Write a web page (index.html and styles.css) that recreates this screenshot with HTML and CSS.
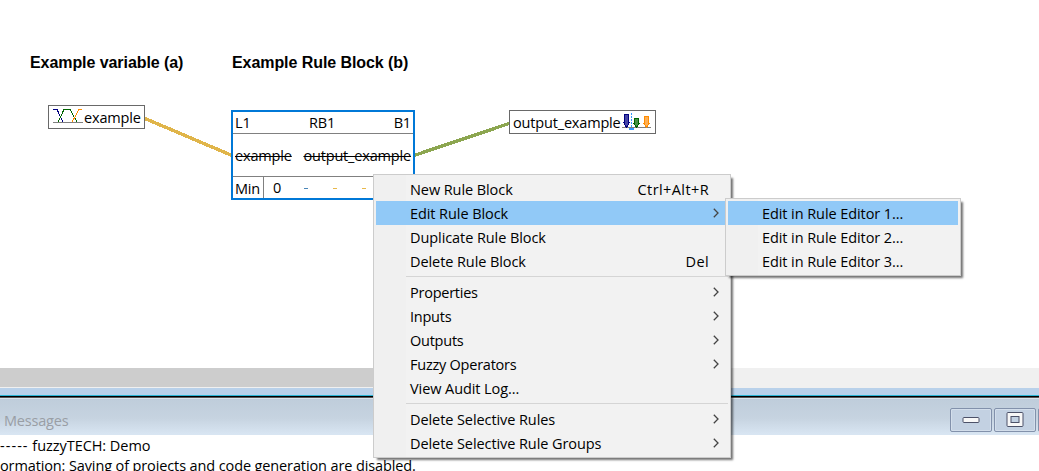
FILE: index.html
```
<!DOCTYPE html>
<html lang="en">
<head>
<meta charset="utf-8">
<title>fuzzyTECH</title>
<link rel="stylesheet" href="styles.css">
</head>
<body>
<main class="canvas">
  <svg class="wires" width="1039" height="368" viewBox="0 0 1039 368" shape-rendering="crispEdges">
    <path d="M145 118.500L232 155.500" stroke="#e0b54a"/>
    <path d="M414 155.500L509 123.500" stroke="#8ca650"/>
  </svg>
  <h2 class="caption caption-variable">Example variable (a)</h2>
  <h2 class="caption caption-block">Example Rule Block (b)</h2>

  <div class="node node-input">
    <svg width="30" height="15" viewBox="0 0 30 15" fill="none" shape-rendering="crispEdges">
      <path d="M0 13.5H30" stroke="#808080"/>
      <path d="M0 .5H4L10 13" stroke="#000080"/>
      <path d="M5 13L11 .5H17L24 13" stroke="#006400"/>
      <path d="M19 13L26 .5H29" stroke="#ff8c00"/>
    </svg>
    <span>example</span>
  </div>

  <section class="block">
    <header class="block-head"><span>L1</span><span>RB1</span><span>B1</span></header>
    <div class="block-body"><s>example</s><s>output_example</s></div>
    <footer class="block-foot"><span class="operator">Min</span><span class="count">0</span><i class="dash blue"></i><i class="dash"></i><i class="dash"></i></footer>
  </section>

  <div class="node node-output">
    <span>output_example</span>
    <svg width="30" height="17" viewBox="0 0 30 17" shape-rendering="crispEdges">
      <path d="M0 14.5H29" stroke="#808080"/>
      <path d="M9.5 0V14" stroke="#3399ff" stroke-dasharray="2 1"/>
      <path d="M7 15H12V17H7Z" fill="#3399ff"/>
      <path d="M2.5 1.5H6.500V9.500H7.500L4.500 14.500L1.500 9.500H2.500Z" fill="#4545a5" stroke="#000080"/>
      <path d="M12.500 5.500H16.500V10.500H17.500L14.500 14L11.500 10.500H12.500Z" fill="#459045" stroke="#006400"/>
      <path d="M22.500 3.500H26.500V10.500H27.500L24.500 14L21.500 10.500H22.500Z" fill="#ffae52" stroke="#ff8c00"/>
    </svg>
  </div>
</main>

<div class="scrollbar"><div class="thumb"></div></div>
<div class="frame-edge"></div>
<section class="messages">
  <header class="titlebar">
    <span class="title">Messages</span>
    <div class="controls">
      <div class="control"><svg width="18" height="16" viewBox="0 0 18 16"><rect x="1" y="5.500" width="16" height="5" rx="1" fill="#f8f8f8" stroke="#4c5168"/></svg></div>
      <div class="control"><svg width="18" height="16" viewBox="0 0 18 16"><rect x="1" y=".5" width="16" height="14" rx="1" fill="#f8f8f8" stroke="#4c5168"/><rect x="5" y="4.500" width="8" height="6" fill="#c2d1e2" stroke="#4c5168"/></svg></div>
      <div class="control"></div>
    </div>
  </header>
  <div class="log">
    <p class="log-first"><span class="rule">-----</span> fuzzyTECH: Demo</p>
    <p class="log-second">ormation: Saving of projects and code generation are disabled.</p>
  </div>
</section>

<nav class="menu context-menu">
  <div class="item"><span>New Rule Block</span><kbd class="shortcut">Ctrl+Alt+R</kbd></div>
  <div class="item active"><span>Edit Rule Block</span><svg class="arrow" viewBox="0 0 6 10"><path d="M.8 .8L5 5L.8 9.200"/></svg></div>
  <div class="item"><span>Duplicate Rule Block</span></div>
  <div class="item"><span>Delete Rule Block</span><kbd class="shortcut">Del</kbd></div>
  <div class="separator"></div>
  <div class="item tight"><span>Properties</span><svg class="arrow" viewBox="0 0 6 10"><path d="M.8 .8L5 5L.8 9.200"/></svg></div>
  <div class="item tight"><span>Inputs</span><svg class="arrow" viewBox="0 0 6 10"><path d="M.8 .8L5 5L.8 9.200"/></svg></div>
  <div class="item tight"><span>Outputs</span><svg class="arrow" viewBox="0 0 6 10"><path d="M.8 .8L5 5L.8 9.200"/></svg></div>
  <div class="item tight"><span>Fuzzy Operators</span><svg class="arrow" viewBox="0 0 6 10"><path d="M.8 .8L5 5L.8 9.200"/></svg></div>
  <div class="item"><span>View Audit Log...</span></div>
  <div class="separator"></div>
  <div class="item"><span>Delete Selective Rules</span><svg class="arrow" viewBox="0 0 6 10"><path d="M.8 .8L5 5L.8 9.200"/></svg></div>
  <div class="item"><span>Delete Selective Rule Groups</span><svg class="arrow" viewBox="0 0 6 10"><path d="M.8 .8L5 5L.8 9.200"/></svg></div>
</nav>
<nav class="menu submenu">
  <div class="item active"><span>Edit in Rule Editor 1...</span></div>
  <div class="item"><span>Edit in Rule Editor 2...</span></div>
  <div class="item"><span>Edit in Rule Editor 3...</span></div>
</nav>
</body>
</html>
```
FILE: styles.css
```
* { box-sizing: border-box; }
body {
  margin: 0;
  width: 1039px;
  height: 471px;
  overflow: hidden;
  position: relative;
  background: #fff;
  color: #000;
  font: 14.5px/20px "Open Sans", "Noto Sans", sans-serif;
  letter-spacing: -0.17px;
  white-space: nowrap;
}
svg { display: block; flex: none; }

.canvas { position: relative; height: 368px; }
.wires { position: absolute; left: 0; top: 0; fill: none; stroke-width: 3.4; }
.caption {
  position: absolute;
  top: 53px;
  margin: 0;
  font: bold 16px/20px "Liberation Sans", Arial, sans-serif;
  letter-spacing: -0.07px;
}
.caption-variable { left: 30px; }
.caption-block { left: 232px; }

.node {
  position: absolute;
  display: flex;
  height: 24px;
  border: 1px solid #696969;
  background: #fff;
  line-height: 23px;
}
.node-input { left: 48px; top: 105px; width: 97px; padding-left: 4px; gap: 1px; }
.node-input svg { margin-top: 3px; }
.node-output { left: 509px; top: 110px; width: 147px; padding-left: 3px; justify-content: space-between; padding-right: 3px; }
.node-output svg { margin-top: 2px; }

.block {
  position: absolute;
  left: 231px;
  top: 110px;
  width: 184px;
  height: 90px;
  border: 2px solid #0078d7;
  background: #fff;
  display: grid;
  grid-template-rows: 22px 42px 22px;
}
.block-head { display: flex; justify-content: space-between; padding: 0 2px; border-bottom: 1px solid #808080; line-height: 21px; }
.block-body { display: flex; justify-content: space-between; align-items: center; padding: 2px 2px 0; }
.block-body s { text-decoration-thickness: 1px; }
.block-foot { display: flex; align-items: center; border-top: 1px solid #808080; }
.operator { width: 31px; height: 21px; padding-left: 2px; border-right: 1px solid #808080; line-height: 23px; }
.count { width: 40px; padding-left: 9px; line-height: 23px; }
.dash { width: 4px; height: 1px; margin: 2px 25px 0 0; flex: none; background: #e8b84a; }
.dash.blue { background: #4a86b8; }

.scrollbar { height: 20px; background: #f0f0f0; padding-bottom: 1px; }
.thumb { width: 600px; height: 19px; background: #cdcdcd; }
.frame-edge {
  height: 10px;
  background: linear-gradient(#b9d1ea 7px, #2bb5d5 7px 8px, #000 8px 9px, #555 9px);
}
.titlebar {
  height: 37px;
  display: flex;
  justify-content: space-between;
  background: linear-gradient(#dce4ec 1px, #bfcddb 1px, #c6d3e0 20px, #d8e5f2 36px);
}
.title { padding: 13px 0 0 4px; color: #999ea5; letter-spacing: -0.2px; }
.controls { display: flex; gap: 2px; width: 89px; padding-top: 10px; overflow: hidden; }
.control {
  width: 42px;
  height: 24px;
  flex: none;
  display: flex;
  align-items: center;
  justify-content: center;
  border: 1px solid #8291ab;
  border-radius: 2px;
  background: #c3d1e2;
  box-shadow: inset 0 0 0 1px #d3deeb;
}
.log { height: 36px; overflow: hidden; }
.log p { margin: 0; line-height: 20px; letter-spacing: -0.12px; }
.log p.log-first { padding-top: 1px; letter-spacing: -0.05px; }
.rule { letter-spacing: 1.05px; }

.menu {
  position: absolute;
  border: 1px solid #ccc;
  padding: 2px;
  background: linear-gradient(90deg, #f0f0f0 32px, #f2f2f2 32px);
  box-shadow: 3px 3px 2px -1px rgba(0, 0, 0, .55);
}
.context-menu { left: 373px; top: 174px; width: 358px; height: 284px; }
.submenu { left: 725px; top: 198px; width: 236px; height: 78px; }
.item {
  height: 24px;
  display: flex;
  justify-content: space-between;
  align-items: center;
  padding: 1px 9px 0 34px;
  letter-spacing: -0.08px;
}
.item.tight { letter-spacing: -0.24px; }
.item.active { background: #91c9f7; }
.shortcut { margin-right: 10px; font: inherit; letter-spacing: 0.4px; }
.arrow { width: 6px; height: 10px; margin-top: -2px; fill: none; stroke: #444; stroke-width: 1.3; }
.separator { height: 1px; margin: 3px 0 3px 30px; background: #d5d5d5; }
```
